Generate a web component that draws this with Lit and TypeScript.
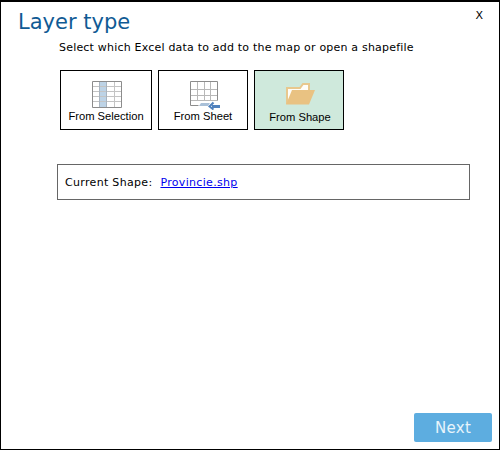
import { LitElement, css, html, svg } from "lit";
import { customElement } from "lit/decorators.js";

const selectionIcon = svg`<svg class="icon selection" width="30" height="27" viewBox="0 0 30 27">
  <rect x="7" y="1" width="8" height="25" fill="#bdd3e6" />
  <path d="M.5 5.500h29M.5 10.500h29M.5 15.500h29M.5 20.500h29M22.500.5v26" fill="none" stroke="#c4c4c4" />
  <path d="M7.500.5v26M14.500.5v26" fill="none" stroke="#a9b4bf" />
  <path d="M.5.5h29v26H.5z" fill="none" stroke="#8c8c8c" />
</svg>`;

const sheetIcon = svg`<svg class="icon sheet" width="31" height="29" viewBox="0 0 31 29">
  <path d="M.5 8.500h27M.5 14.500h27M.5 19.500h27M7.500.5v19M14.500.5v19M20.500.5v19" fill="none" stroke="#b8b8b8" />
  <path d="M27.500 19.500V.5H.5v24h8" fill="none" stroke="#8c8c8c" />
  <path d="M9 25l2-3h9l-2 3z" fill="#a9c0d8" />
  <path d="M22 25.500h8" stroke="#4f81bd" stroke-width="3" />
  <path d="M23.500 21.500l-4 4 4 3" fill="none" stroke="#4f81bd" stroke-width="2" />
</svg>`;

const folderIcon = svg`<svg class="icon folder" width="30" height="22" viewBox="0 0 30 22">
  <path d="M1 21V5h13l3-4h6V8" fill="#fffdf8" stroke="#e8c88e" stroke-width="2" />
  <path d="M0 21.500L6 7h23l-6 14.500z" fill="#e9c282" />
</svg>`;

@customElement("app-root")
export class AppRoot extends LitElement {
  static styles = css`
    :host {
      display: block;
      box-sizing: border-box;
      width: 500px;
      height: 450px;
      border: 1px solid #000;
      border-top-width: 2px;
      background: #fff;
      font-family: "DejaVu Sans", Verdana, sans-serif;
      color: #000;
    }
    .dialog {
      display: flex;
      flex-direction: column;
      height: 100%;
      box-sizing: border-box;
      padding: 5px 6px 7px 17px;
    }
    .head {
      display: flex;
      justify-content: space-between;
    }
    .title {
      margin: 0;
      font-size: 21px;
      font-weight: 400;
      line-height: 30px;
      color: #0f5a94;
    }
    .close {
      border: none;
      background: none;
      padding: 0;
      margin-right: 10px;
      height: 17px;
      font: 11px "DejaVu Sans", sans-serif;
      color: #000;
    }
    .body {
      flex: 1;
      padding-left: 39px;
    }
    .hint {
      margin: 3px 0 14px 2px;
      font-size: 11px;
      line-height: 16px;
      letter-spacing: 0.2px;
    }
    .choices {
      display: flex;
      gap: 6px;
      margin-left: 3px;
    }
    .choice {
      box-sizing: border-box;
      width: 92px;
      height: 60px;
      border: 1px solid #000;
      background: #fff;
      display: flex;
      flex-direction: column;
      align-items: center;
      padding: 10px 0 0;
      font: 11.200px "Liberation Sans", Arial, sans-serif;
      color: #000;
    }
    .choice.narrow {
      width: 90px;
    }
    .choice.active {
      width: 90px;
      background: #cfe9dc;
    }
    .choice.active .label {
      margin-left: 2px;
    }
    .icon {
      display: block;
    }
    .label {
      line-height: 14px;
      margin-top: 1px;
    }
    .selection {
      margin-left: 2px;
    }
    .sheet {
      margin: 0 0 -2px 5px;
    }
    .folder {
      margin: 2px 0 4px 4px;
    }
    .current {
      box-sizing: border-box;
      width: 413px;
      height: 36px;
      margin-top: 34px;
      border: 1px solid #666;
      display: flex;
      align-items: center;
      gap: 8px;
      padding-left: 7px;
      font-size: 11px;
      letter-spacing: 0.32px;
    }
    .current a {
      color: #0000ee;
    }
    .foot {
      display: flex;
      justify-content: flex-end;
    }
    .next {
      width: 78px;
      height: 29px;
      margin-right: 1px;
      border: none;
      border-radius: 2px;
      background: #5dade0;
      color: #e8f4fb;
      font: 15px "DejaVu Sans", sans-serif;
      letter-spacing: 0.3px;
    }
  `;

  render() {
    return html`<div class="dialog">
      <header class="head">
        <h1 class="title">Layer type</h1>
        <button class="close">X</button>
      </header>
      <div class="body">
        <p class="hint">Select which Excel data to add to the map or open a shapefile</p>
        <div class="choices">
          <button class="choice">${selectionIcon}<span class="label">From Selection</span></button>
          <button class="choice narrow">${sheetIcon}<span class="label">From Sheet</span></button>
          <button class="choice active">${folderIcon}<span class="label">From Shape</span></button>
        </div>
        <div class="current">
          <span>Current Shape:</span>
          <a href="#">Provincie.shp</a>
        </div>
      </div>
      <footer class="foot"><button class="next">Next</button></footer>
    </div>`;
  }
}
